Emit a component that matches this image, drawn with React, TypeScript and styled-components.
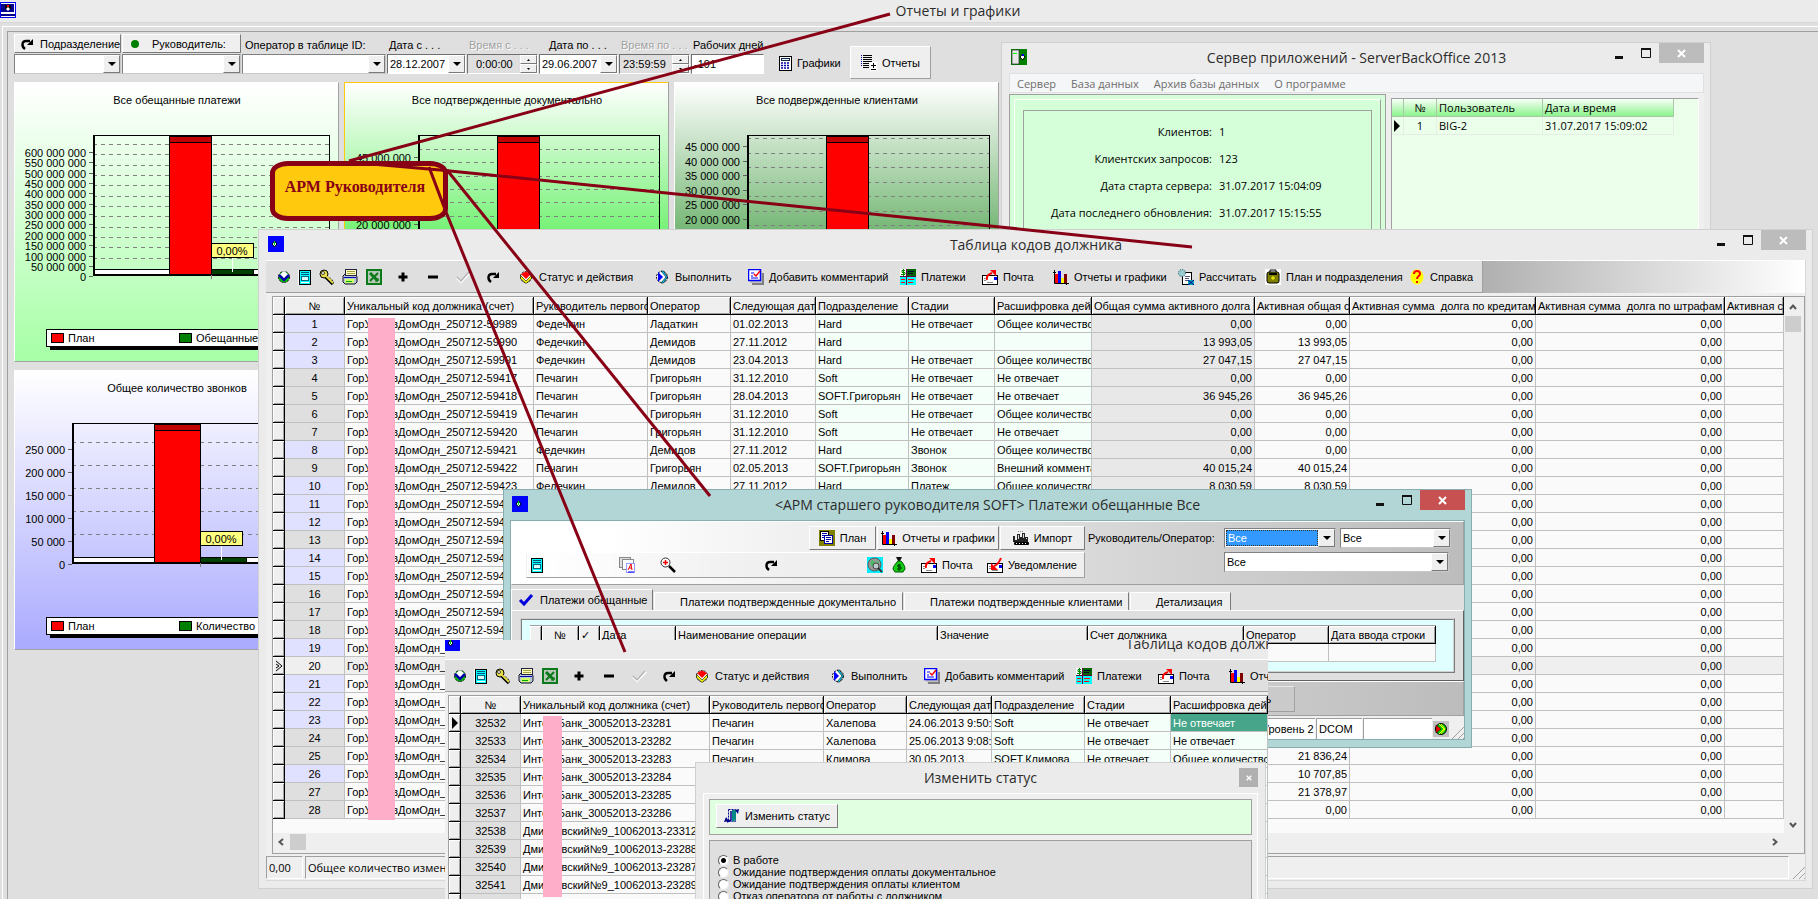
import React from 'react';
import styled, { createGlobalStyle, css } from 'styled-components';

const UI = '"Liberation Sans", Arial, sans-serif';
const SEGOE = '"Open Sans", "Noto Sans", sans-serif';
const MAROON = '#880015';

const GlobalStyle = createGlobalStyle`
  *, *::before, *::after { box-sizing: border-box; }
  html, body { margin: 0; padding: 0; height: 100%; }
  body { background: #dfdfdf; color: #000; font: 11px/14px ${UI}; overflow: hidden; }
  button, input, select { font: inherit; color: inherit; margin: 0; padding: 0; border: 0; background: none; border-radius: 0; outline: none; }
  select { appearance: none; }
  h1, h2, p { margin: 0; font-weight: 400; }
`;

/* ---------- icons ---------- */

type IconName =
  | 'chevron' | 'card' | 'key' | 'printer' | 'excel' | 'plus' | 'minus' | 'check' | 'refresh'
  | 'status' | 'run' | 'comment' | 'payments' | 'mail' | 'bars' | 'calc' | 'plan' | 'help'
  | 'screen' | 'app' | 'server' | 'calculator' | 'report' | 'planDoc' | 'import' | 'windows'
  | 'zoom' | 'globe' | 'bag' | 'notify' | 'blueCheck' | 'go' | 'door' | 'dot';

const envelope = (
  <>
    <rect x="0.5" y="6.5" width="15" height="9" fill="#fff" stroke="#000" />
    <rect x="12" y="8" width="3" height="3" fill="#00f" />
    <path d="M2 9.500h3M2 11.500h2M5 13.500h6" stroke="#888" />
  </>
);

const ICONS: Record<IconName, React.ReactNode> = {
  chevron: (
    <>
      <circle cx="8" cy="8" r="5.500" fill="#0c0" stroke="#000" strokeDasharray="2 1" />
      <path d="M3 6l5-4 5 4-5 5z" fill="#fff" />
      <path d="M3 6l5 5 5-5" stroke="#00a" strokeWidth="2.600" fill="none" />
    </>
  ),
  card: (
    <>
      <rect x="2.500" y="1.500" width="11" height="14" fill="#0ff" stroke="#000" />
      <path d="M4 3.500h8M4 5.500h8" stroke="#057" />
      <rect x="4.500" y="7.500" width="7" height="4" fill="#dff" stroke="#068" />
      <path d="M4 13.500h8" stroke="#fff" />
      <path d="M1.500 1v15" stroke="#fff" />
    </>
  ),
  key: (
    <>
      <circle cx="5" cy="5" r="4" fill="#e6dc4a" stroke="#000" />
      <circle cx="4" cy="4" r="1.500" fill="#fff" stroke="#000" strokeWidth="0.7" />
      <path d="M7 8l7 7M10 11l2-1M12 13l2-1" stroke="#000" strokeWidth="3.500" />
      <path d="M7 7l7 7M11 11l1-1" stroke="#e6dc4a" strokeWidth="1.800" />
    </>
  ),
  printer: (
    <>
      <path d="M1 7l2-2h11l1 3v5l-2 2H3l-2-2z" fill="#b8c4d8" stroke="#112" />
      <rect x="3.500" y="0.500" width="11" height="6" fill="#ffffc0" stroke="#224" />
      <path d="M5 2.500h8M5 4.500h8" stroke="#a0a040" />
      <rect x="3" y="10" width="9" height="4" fill="#cf6" />
      <path d="M2 8.500h12" stroke="#00a" />
      <path d="M4 12.500h6" stroke="#0a0" />
    </>
  ),
  excel: (
    <>
      <rect x="1" y="1" width="14" height="14" fill="#b8c8b8" stroke="#0a7a1a" strokeWidth="2" />
      <path d="M4 4l8 8" stroke="#0a7a1a" strokeWidth="3" />
      <path d="M12 4l-8 8" stroke="#0a7a1a" strokeWidth="2" />
      <path d="M9 12h3V9" stroke="#0a7a1a" fill="none" />
    </>
  ),
  plus: <path d="M8 3.500v9M3.500 8h9" stroke="#000" strokeWidth="3" />,
  minus: <path d="M3 8h10" stroke="#000" strokeWidth="3" />,
  check: (
    <>
      <path d="M2 9l4 4 9-9" stroke="#fff" strokeWidth="2" fill="none" />
      <path d="M2 8l4 4 8-9" stroke="#b4b4b4" strokeWidth="1.400" fill="none" />
    </>
  ),
  refresh: (
    <>
      <path d="M6 13C2 10 3 5 7 5h4" stroke="#000" strokeWidth="2.400" fill="none" />
      <path d="M8 9h6V3z" fill="#000" />
    </>
  ),
  status: (
    <>
      <circle cx="8" cy="8" r="5.500" fill="#fff" stroke="#000" strokeDasharray="2 1" />
      <path d="M2.500 6.500L8 12l5.500-5.500v3L8 14.500 2.500 9.500z" fill="#ff0" stroke="#000" strokeWidth="0.6" />
      <path d="M3 5l5-2.500L13 5l-5 5z" fill="#f00" />
    </>
  ),
  run: (
    <>
      <circle cx="8" cy="8" r="5.500" fill="#fff" stroke="#000" strokeDasharray="2 1" />
      <path d="M7 2l5 6-5 6h2.500l4-6-4-6z" fill="#0cf" stroke="#000" strokeWidth="0.6" />
      <path d="M4 3v10l5-5z" fill="#00f" />
    </>
  ),
  comment: (
    <>
      <path d="M4 4h12v12H4z" fill="#808080" />
      <path d="M2 2h12v12H2z" fill="#c0c0c0" />
      <rect x="0.500" y="0.500" width="12" height="11" fill="#fff" stroke="#00f" strokeWidth="1.500" />
      <path d="M3 4h3M3 7h2M3 9h7" stroke="#00f" />
      <path d="M6 5l2 2 4-5" stroke="#f00" strokeWidth="1.500" fill="none" />
    </>
  ),
  payments: (
    <>
      <rect width="16" height="16" fill="#0ff" />
      <rect width="6" height="7" fill="#fff" />
      <rect x="6" width="10" height="7" fill="#006400" />
      <path d="M5 1.500H2v2h3v2H1M3.500 0v7" stroke="#080" fill="none" />
      <path d="M8 2.500h6M8 4.500h5" stroke="#003" />
      <path d="M6.500 0v16M0 7.500h16" stroke="#604" />
      <path d="M1 10.500h4M1 13.500h4M8 10.500h6M8 13.500h5" stroke="#f00" />
    </>
  ),
  mail: (
    <>
      {envelope}
      <path d="M5 11C4 7 7 5 10 4" stroke="#f00" strokeWidth="2" fill="none" />
      <path d="M8 1h6v6z" fill="#f00" />
    </>
  ),
  notify: (
    <>
      {envelope}
      <path d="M14 1c-2 5-4 7-7 8" stroke="#f00" strokeWidth="2" fill="none" />
      <path d="M4 6v7h7z" fill="#f00" />
    </>
  ),
  bars: (
    <>
      <path d="M1.500 1v13.500H16M0 3.500h3M13.500 13v3" stroke="#000" fill="none" />
      <rect x="2" y="5" width="3" height="9" fill="#f00" />
      <rect x="5" y="2" width="3" height="12" fill="#00f" />
      <rect x="8" y="9" width="3" height="5" fill="#ff0" />
      <rect x="11" y="5" width="3" height="9" fill="#800000" />
    </>
  ),
  calc: (
    <>
      <rect x="4.500" y="3.500" width="9" height="12" fill="#fff" stroke="#000" />
      <circle cx="4" cy="4" r="3.500" fill="#9cc" stroke="#256" strokeDasharray="1 1" />
      <path d="M7 7.500h5M7 9.500h4M7 11.500h3" stroke="#557" />
      <path d="M10 11h6v5h-6z" fill="#0aa" />
      <path d="M10 11l6 5M16 11l-6 5" stroke="#00a" />
    </>
  ),
  plan: (
    <>
      <rect width="16" height="16" fill="#fff" />
      <rect x="2" y="3" width="12" height="11" rx="2" fill="#808000" stroke="#000" />
      <path d="M5 3V1h6v2" stroke="#000" fill="none" />
      <path d="M4 5h8" stroke="#000" strokeWidth="2" />
      <path d="M8 7v4M6 9h4" stroke="#ff0" />
    </>
  ),
  help: (
    <>
      <ellipse cx="8" cy="8" rx="6.500" ry="7.500" fill="#ff0" stroke="#fff080" strokeDasharray="1 1" />
      <path d="M5 5c0-4 6-4 6 0 0 2-3 2-3 5" stroke="#f00" strokeWidth="2" fill="none" />
      <rect x="7" y="12" width="2" height="2" fill="#f00" />
    </>
  ),
  screen: (
    <>
      <rect x="0.500" y="0.500" width="15" height="15" fill="#fff" stroke="#00f" />
      <rect x="1" y="2" width="13" height="8" fill="#00008b" />
      <rect x="5" y="3" width="6" height="4" fill="#000" />
      <path d="M6 7l2-2 2 2-2 2z" fill="#fff" />
      <rect x="7" y="3" width="2" height="2" fill="#f00" />
      <path d="M1 13h14" stroke="#00008b" strokeWidth="2" />
    </>
  ),
  app: (
    <>
      <rect width="16" height="16" fill="#00f" />
      <path d="M4 8l2.500-3L9 8l-2.500 3z" fill="#cff" stroke="#000" />
      <rect x="6" y="5" width="1" height="4" fill="#0c0" />
    </>
  ),
  server: (
    <>
      <rect width="16" height="16" fill="#008000" />
      <rect x="1" y="1" width="7" height="14" fill="#e8e8e8" stroke="#333" strokeWidth="0.700" />
      <path d="M2 4.500h4" stroke="#0f0" />
      <path d="M9 8l2.500-3L14 8l-2.500 3z" fill="#fff" stroke="#000" />
      <rect x="11" y="5" width="2" height="2" fill="#00f" />
    </>
  ),
  calculator: (
    <>
      <rect x="2.500" y="1.500" width="12" height="14" fill="#fff" stroke="#000" />
      <rect x="4.500" y="3.500" width="8" height="2" fill="#cff" stroke="#224" />
      <path d="M4 8h9M4 10.500h9M4 13h9" stroke="#00a" strokeWidth="1.500" strokeDasharray="2 1" />
    </>
  ),
  report: (
    <>
      <path d="M2 0.500h9M2 2.500h9M2 4.500h9M2 6.500h9M2 8.500h6M2 10.500h6M2 12.500h6" stroke="#000" />
      <path d="M0 0.500h1M0 2.500h1M0 4.500h1M0 6.500h1M0 8.500h1M0 10.500h1" stroke="#00a" />
      <rect x="9" y="7" width="7" height="9" fill="#fff" />
      <path d="M12.500 8v5M10 10.500h5M10 14.500h5" stroke="#000" />
    </>
  ),
  planDoc: (
    <>
      <rect width="16" height="16" fill="#808000" />
      <rect x="1.500" y="1.500" width="8" height="9" fill="#fff" stroke="#000" />
      <path d="M3 3.500h5M3 5.500h5M3 7.500h5" stroke="#00a" />
      <rect x="5.500" y="5.500" width="8" height="8" fill="#fff" stroke="#00a" />
      <path d="M7 7.500h5M7 9.500h5M7 11.500h3" stroke="#00a" />
    </>
  ),
  import: (
    <>
      <path d="M5 1.500h6" stroke="#888" strokeDasharray="1 1" />
      <path d="M4 10V4h3v3h2V3h3v4h3v5H0V6h2v4z" fill="#222" />
      <path d="M5.500 5v4M10.500 4v4M13 8.500h1" stroke="#ddd" fill="none" />
      <rect x="1" y="12" width="15" height="3" rx="1" fill="#000" />
      <path d="M3 13.500h11" stroke="#fff" strokeDasharray="1 2" />
    </>
  ),
  windows: (
    <>
      <rect x="0.500" y="0.500" width="11" height="10" fill="#ddd" stroke="#888" />
      <rect x="3.500" y="2.500" width="11" height="10" fill="#fff" stroke="#888" />
      <rect x="7.500" y="6.500" width="8" height="9" fill="#fff" stroke="#99f" />
      <path d="M9 13l3-6 1 6M10 11h3" stroke="#e00" fill="none" />
      <path d="M9 15h6" stroke="#00f" />
    </>
  ),
  zoom: (
    <>
      <path d="M9 9l6 6" stroke="#000" strokeWidth="2.500" />
      <circle cx="5.500" cy="5.500" r="4.500" fill="#fff" stroke="#333" />
      <path d="M5.500 3v5M3 5.500h5" stroke="#e00" strokeWidth="1.500" />
    </>
  ),
  globe: (
    <>
      <rect width="16" height="16" fill="#0ef" />
      <circle cx="7.500" cy="7.500" r="6.500" fill="#999" stroke="#555" />
      <path d="M3 5l3-2 2 3-3 4zM9 3l3 2-1 3z" fill="#4b6" />
      <circle cx="9" cy="9" r="3" fill="#bcc" stroke="#444" />
      <path d="M11 11l4 4" stroke="#333" strokeWidth="2" />
    </>
  ),
  bag: (
    <>
      <path d="M6 0h6L10 4H8z" fill="#111" />
      <path d="M8 4h3c3 3 4 6 4 8l-2 3H5l-2-3c0-2 2-5 5-8z" fill="#1c1" stroke="#050" />
      <path d="M11 8H8v2h3v2H7M9 7v7" stroke="#030" fill="none" />
      <path d="M0 1h4M1 4h3" stroke="#fff" />
    </>
  ),
  blueCheck: <path d="M2 8l4 4 8-9" stroke="#00d" strokeWidth="3" fill="none" />,
  go: (
    <>
      <rect width="16" height="16" fill="#c0c0c0" />
      <circle cx="8" cy="8" r="5.500" fill="#0c0" stroke="#000" />
      <path d="M3 4v8l5-4z" fill="#f00" stroke="#000" strokeWidth="0.500" />
      <path d="M6 3l5 5-5 5M8 3l4 5-4 5" stroke="#ff0" fill="none" />
    </>
  ),
  door: (
    <>
      <rect x="4.500" y="1.500" width="7" height="12" fill="#e8e8e8" stroke="#00008b" strokeDasharray="2 1" />
      <path d="M8 2h4v10l-4 2z" fill="#088" />
      <path d="M11 2l4-1-1 5zM0 14l5-1-3-4z" fill="#00008b" />
      <path d="M7 3v9l-4 2" stroke="#00008b" strokeWidth="1.500" fill="none" />
    </>
  ),
  dot: <circle cx="8" cy="8" r="4" fill="#008000" />,
};

const Svg = styled.svg`
  flex: none;
  display: block;
`;

const Icon = ({ name }: { name: IconName }) => (
  <Svg width="16" height="16" viewBox="0 0 16 16" aria-hidden="true">{ICONS[name]}</Svg>
);

/* ---------- window chrome ---------- */

const WindowFrame = styled.section<{ $active?: boolean }>`
  display: flex;
  flex-direction: column;
  background: ${p => (p.$active ? '#b2d6d6' : '#ebebeb')};
  border: 1px solid ${p => (p.$active ? '#86aeb0' : '#d0d0d0')};
  padding: 0 6px 7px ${p => (p.$active ? 6 : 7)}px;
`;

const TitleBar = styled.header`
  display: grid;
  grid-template-columns: 1fr auto 1fr;
  height: 30px;
  flex: none;
`;

const TitleIcon = styled.div`
  padding: 6px 0 0 2px;
`;

const Title = styled.h2`
  font: 14px/30px ${SEGOE};
  color: #2b2b2b;
  white-space: nowrap;
`;

const WindowButtons = styled.div`
  display: flex;
  justify-content: flex-end;
  align-items: flex-start;
`;

const GlyphButton = styled.button`
  width: 27px;
  height: 20px;
  display: flex;
  align-items: center;
  justify-content: center;
`;

const CloseButton = styled.button<{ $active?: boolean }>`
  width: 45px;
  height: 20px;
  display: flex;
  align-items: center;
  justify-content: center;
  background: ${p => (p.$active ? '#c75050' : '#bcbcbc')};
`;

const Cross = () => (
  <Svg width="9" height="9" viewBox="0 0 9 9"><path d="M1 1l7 7M8 1l-7 7" stroke="#fff" strokeWidth="2" /></Svg>
);

const Caption = ({ icon, title, active }: { icon: IconName; title: string; active?: boolean }) => (
  <TitleBar>
    <TitleIcon><Icon name={icon} /></TitleIcon>
    <Title>{title}</Title>
    <WindowButtons>
      <GlyphButton aria-label="Свернуть">
        <Svg width="10" height="12" viewBox="0 0 10 12"><rect x="1" y="9" width="8" height="3" fill="#111" /></Svg>
      </GlyphButton>
      <GlyphButton aria-label="Развернуть">
        <Svg width="10" height="10" viewBox="0 0 10 10"><path d="M.5 1v8.500h9V1" stroke="#111" fill="none" /><rect width="10" height="2" fill="#111" /></Svg>
      </GlyphButton>
      <CloseButton $active={active} aria-label="Закрыть"><Cross /></CloseButton>
    </WindowButtons>
  </TitleBar>
);

/* ---------- shared controls ---------- */

const raised = css`
  background: #efefef;
  border: 1px solid;
  border-color: #fff #7a7a7a #7a7a7a #fff;
`;

const PushButton = styled.button<{ $w?: number; $h?: number }>`
  ${raised}
  display: flex;
  align-items: center;
  justify-content: center;
  gap: 5px;
  width: ${p => (p.$w ? `${p.$w}px` : 'auto')};
  height: ${p => p.$h ?? 24}px;
  white-space: nowrap;
`;

const ComboWrap = styled.div<{ $w?: number }>`
  position: relative;
  width: ${p => (p.$w ? `${p.$w}px` : '100%')};
  height: 20px;
  background: #fff;
  border: 1px solid;
  border-color: #808080 #c8c8c8 #c8c8c8 #808080;
`;

const ComboSelect = styled.select<{ $hot?: boolean }>`
  width: calc(100% - 18px);
  height: 18px;
  padding: 0 2px;
  display: block;
  ${p => p.$hot && css`
    height: 16px;
    margin: 1px;
    background: #3399ff;
    color: #fff;
    outline: 1px dotted #333;
    outline-offset: -1px;
  `}
`;

const Drop = styled.span`
  position: absolute;
  right: 0;
  top: 0;
  width: 17px;
  height: 18px;
  ${raised}
  display: flex;
  align-items: center;
  justify-content: center;
  pointer-events: none;
`;

const Triangle = () => (
  <Svg width="8" height="4" viewBox="0 0 8 4"><path d="M0 0h8L4 4z" fill="#000" /></Svg>
);

const Combo = ({ label, value = '', w, hot }: { label: string; value?: string; w?: number; hot?: boolean }) => (
  <ComboWrap $w={w}>
    <ComboSelect aria-label={label} $hot={hot} defaultValue={value}><option>{value}</option></ComboSelect>
    <Drop><Triangle /></Drop>
  </ComboWrap>
);

/* ---------- reports window ---------- */

const Desktop = styled.main`
  position: relative;
  height: 100vh;
  overflow: hidden;
  background: #dfdfdf;
`;

const ReportsBar = styled.header`
  display: flex;
  align-items: flex-start;
  height: 23px;
  padding-top: 2px;
  background: #ebebeb;
  border-bottom: 1px solid #d8d8d8;
`;

const ReportsTitle = styled.h1`
  flex: 1;
  padding-left: 82px;
  text-align: center;
  font: 14px/17px ${SEGOE};
  color: #2b2b2b;
`;

const OuterEdge = styled.div`
  margin: 3px 0 0 2px;
  padding: 4px 0 0 4px;
  border: 1px solid #fff;
  border-width: 1px 0 0 1px;
`;

const InnerEdge = styled.div`
  border: 1px solid #a0a0a0;
  border-width: 1px 0 0 1px;
  padding: 2px 0 0 6px;
  min-height: 100vh;
`;

const Filters = styled.div`
  display: flex;
  align-items: flex-start;
  height: 48px;
`;

const FilterColumn = styled.div<{ $w: number }>`
  width: ${p => p.$w}px;
  padding-right: 1px;
  flex: none;
`;

const FilterLabel = styled.label<{ $pad?: number; $off?: boolean }>`
  display: block;
  height: 20px;
  padding-left: ${p => p.$pad ?? 2}px;
  line-height: 22px;
  white-space: nowrap;
  overflow: hidden;
  color: ${p => (p.$off ? '#a0a0a0' : '#000')};
  text-shadow: ${p => (p.$off ? '1px 1px 0 #fff' : 'none')};
`;

const FilterButton = styled(PushButton)`
  width: 100%;
  height: 19px;
  margin-bottom: 1px;
  justify-content: flex-start;
  padding-left: 4px;
  overflow: hidden;
`;

const ManagerButton = styled(FilterButton)`
  gap: 9px;
`;

const Field = styled.div<{ $off?: boolean }>`
  display: flex;
  height: 20px;
  border: 1px solid;
  border-color: #707070 #fff #fff #707070;
  background: ${p => (p.$off ? '#dfdfdf' : '#fff')};
`;

const FieldInput = styled.input<{ $pad?: number }>`
  flex: 1;
  min-width: 0;
  padding-left: ${p => p.$pad ?? 2}px;
`;

const DropButton = styled.button`
  ${raised}
  width: 17px;
  display: flex;
  align-items: center;
  justify-content: center;
`;

const Spinner = styled.div`
  display: flex;
  flex-direction: column;
  width: 17px;
`;

const SpinButton = styled.button`
  ${raised}
  flex: 1;
  display: flex;
  align-items: center;
  justify-content: center;
`;

const FlatButton = styled.button`
  display: flex;
  align-items: center;
  gap: 4px;
  width: 80px;
  height: 33px;
  margin: 12px 0 0 5px;
  padding-left: 7px;
`;

const ReportButton = styled(PushButton)`
  margin-top: 12px;
  border-color: #fff #a0a0a0 #a0a0a0 #fff;
`;

const DateField = ({ id, value }: { id: string; value: string }) => (
  <Field>
    <FieldInput id={id} defaultValue={value} />
    <DropButton aria-label="Выбрать дату"><Triangle /></DropButton>
  </Field>
);

const TimeField = ({ id, value, pad }: { id: string; value: string; pad: number }) => (
  <Field $off>
    <FieldInput id={id} defaultValue={value} $pad={pad} />
    <Spinner>
      <SpinButton aria-label="Больше"><Svg width="3" height="2" viewBox="0 0 3 2"><path d="M0 2h3L1.500 0z" /></Svg></SpinButton>
      <SpinButton aria-label="Меньше"><Svg width="3" height="2" viewBox="0 0 3 2"><path d="M0 0h3L1.500 2z" /></Svg></SpinButton>
    </Spinner>
  </Field>
);

/* ---------- charts ---------- */

const ChartGrid = styled.div`
  display: grid;
  grid-template-columns: repeat(3, 325px);
  gap: 8px 5px;
`;

const ChartCard = styled.figure<{ $fill: string; $edge?: string }>`
  margin: 0;
  height: 280px;
  background: linear-gradient(${p => p.$fill});
  border: 1px solid;
  border-color: ${p => p.$edge ?? '#fff'} #a0a0a0 #a0a0a0 ${p => p.$edge ?? '#fff'};
`;

interface ChartProps {
  title: string;
  fill: string;
  edge?: string;
  left: number;
  bar: [number, number];
  labels: string[];
  first: number;
  step: number;
  gridStart: number;
  legend?: string;
}

const Chart = ({ title, fill, edge, left, bar, labels, first, step, gridStart, legend }: ChartProps) => {
  const right = 315;
  const lines: number[] = [];
  for (let y = gridStart; y < 182; y += step) lines.push(Math.round(y));
  const [b0, b1] = bar;
  return (
    <ChartCard $fill={fill} $edge={edge}>
      <Svg width="323" height="278" viewBox="1 1 323 278" fontFamily="Liberation Sans" fontSize="11" shapeRendering="crispEdges">
        <text x="163" y="22" textAnchor="middle">{title}</text>
        <rect x={left} y="53.500" width={right - left} height="134" fill="none" stroke="#000" />
        {lines.map(y => <path key={y} d={`M${left - 1} ${y + 0.5}H${right}`} stroke="#808080" strokeDasharray="4 4" />)}
        <path d={`M${left} 187.500H${right}`} stroke="#000" strokeDasharray="3 3" />
        <rect x={left} y="188" width={right - left} height="5" fill="#fff" />
        <path d={`M${left} 193h${right - left}`} stroke="#000" strokeWidth="2" />
        <path d={`M${left} 53v141`} stroke="#000" strokeWidth="2" />
        {labels.map((t, i) => {
          const y = Math.round(first + i * step);
          return (
            <g key={t}>
              <text x={left - 8} y={y + 4} textAnchor="end">{t}</text>
              <path d={`M${left - 5} ${y - 0.5}h4`} stroke="#606060" />
            </g>
          );
        })}
        <rect x={b0 + 0.5} y="54.500" width={b1 - b0} height="6" fill="#c00000" stroke="#000" />
        <rect x={b0 + 0.5} y="60.500" width={b1 - b0} height="132" fill="#f00" stroke="#000" />
        <rect x={b1 + 0.5} y="187.500" width={b1 - b0} height="5" fill="#004000" stroke="#000" />
        <path d={`M${b1 + 0.5} 193v4`} stroke="#808080" />
        <rect x={b1 + 0.5} y="161.500" width="42" height="14" fill="#ffff80" stroke="#000" />
        <text x={b1 + 21} y="173" textAnchor="middle">0,00%</text>
        <path d={`M${b1 + 21.500} 176v14`} stroke="#fff" />
        {legend && (
          <g>
            <rect x="36" y="252" width="250" height="16" fill="#000" />
            <rect x="32.500" y="247.500" width="250" height="17" fill="#fff" stroke="#000" />
            <rect x="37.500" y="251.500" width="12" height="9" fill="#f00" stroke="#000" />
            <text x="54" y="260">План</text>
            <rect x="165.500" y="251.500" width="12" height="9" fill="#008000" stroke="#000" />
            <text x="182" y="260">{legend}</text>
          </g>
        )}
      </Svg>
    </ChartCard>
  );
};

const steps = (from: number, by: number) => {
  const out: string[] = [];
  for (let v = from; v >= 0; v -= by) out.push(String(v).replace(/\B(?=(\d{3})+$)/g, '\u00a0'));
  return out;
};

const Reports = () => (
  <>
    <ReportsBar>
      <Icon name="screen" />
      <ReportsTitle>Отчеты и графики</ReportsTitle>
    </ReportsBar>
    <OuterEdge>
      <InnerEdge>
        <Filters>
          <FilterColumn $w={108}>
            <FilterButton><Icon name="refresh" />Подразделение</FilterButton>
            <Combo label="Подразделение" />
          </FilterColumn>
          <FilterColumn $w={120}>
            <ManagerButton><Icon name="dot" />Руководитель:</ManagerButton>
            <Combo label="Руководитель" />
          </FilterColumn>
          <FilterColumn $w={145}>
            <FilterLabel as="div" $pad={3}>Оператор в таблице ID:</FilterLabel>
            <Combo label="Оператор в таблице ID" />
          </FilterColumn>
          <FilterColumn $w={80}>
            <FilterLabel htmlFor="date-from">Дата с . . .</FilterLabel>
            <DateField id="date-from" value="28.12.2007" />
          </FilterColumn>
          <FilterColumn $w={72}>
            <FilterLabel htmlFor="time-from" $off>Время с . . .</FilterLabel>
            <TimeField id="time-from" value="0:00:00" pad={8} />
          </FilterColumn>
          <FilterColumn $w={80}>
            <FilterLabel htmlFor="date-to" $pad={10}>Дата по . . .</FilterLabel>
            <DateField id="date-to" value="29.06.2007" />
          </FilterColumn>
          <FilterColumn $w={72}>
            <FilterLabel htmlFor="time-to" $off>Время по . . .</FilterLabel>
            <TimeField id="time-to" value="23:59:59" pad={3} />
          </FilterColumn>
          <FilterColumn $w={74}>
            <FilterLabel htmlFor="work-days">Рабочих дней</FilterLabel>
            <Field><FieldInput id="work-days" defaultValue="-191" /></Field>
          </FilterColumn>
          <FlatButton><Icon name="calculator" />Графики</FlatButton>
          <ReportButton $w={81} $h={33}><Icon name="report" />Отчеты</ReportButton>
        </Filters>
        <ChartGrid>
          <Chart title="Все обещанные платежи" fill="#ffffff, #a6ffa6" left={80} bar={[155, 197]}
            labels={steps(600000000, 50000000)} first={71} step={10.35} gridStart={62} legend="Обещанные" />
          <Chart title="Все подтвержденные документально" fill="#ffffff, #79f279 52%, #40e840" edge="#ffc90e" left={75} bar={[153, 195]}
            labels={steps(45000000, 5000000)} first={76} step={13.300} gridStart={67} />
          <Chart title="Все подвержденные клиентами" fill="#ffffff, #78b878 52%, #409040" left={74} bar={[152, 194]}
            labels={steps(45000000, 5000000)} first={65} step={14.500} gridStart={56} />
          <Chart title="Общее количество звонков" fill="#ffffff, #aaaaff" left={59} bar={[140, 186]}
            labels={steps(250000, 50000)} first={80} step={23} gridStart={72} legend="Количество" />
        </ChartGrid>
      </InnerEdge>
    </OuterEdge>
  </>
);

/* ---------- server window ---------- */

const ServerWindow = styled(WindowFrame)`
  position: absolute;
  left: 1001px;
  top: 42px;
  width: 710px;
  height: 300px;
`;

const Menu = styled.nav`
  display: flex;
  gap: 15px;
  height: 20px;
  padding-left: 7px;
  background: #f5f6f7;
  border: 1px solid #e0e0e0;
  font: 11px/19px ${SEGOE};
  color: #6d6d6d;
`;

const ServerBody = styled.div`
  display: flex;
  gap: 5px;
  flex: 1;
  padding-top: 1px;
  background: #efefef;
`;

const ServerPane = styled.div`
  width: 377px;
  padding: 4px 4px 0;
  background: #d5ffd8;
  border: 1px solid #a0a0a0;
`;

const ServerEdge = styled.div`
  height: 100%;
  padding: 10px 8px 0;
  border: 1px solid #fff;
  border-right-color: #a0a0a0;
`;

const ServerStats = styled.dl`
  display: grid;
  grid-template-columns: 188px 1fr;
  grid-auto-rows: 27px;
  gap: 0 7px;
  height: 100%;
  margin: 0;
  padding-top: 8px;
  line-height: 26px;
  border: 1px solid #a0a0a0;
  font-family: ${SEGOE};
  dt { text-align: right; white-space: nowrap; }
  dd { margin: 0; }
`;

const UserPane = styled.div`
  flex: 1;
  margin: 4px 5px 0 0;
  background: #ebffeb;
  border: 1px solid #a0a0a0;
  border-right-color: #fff;
`;

const UserTable = styled.table`
  border-collapse: separate;
  border-spacing: 0;
  table-layout: fixed;
  width: 282px;
  font-family: ${SEGOE};
  th, td { height: 18px; padding: 0 2px; border: 1px solid #e4eee4; border-width: 0 1px 1px 0; text-align: left; font-weight: 400; line-height: 16px; white-space: nowrap; }
  th { background: linear-gradient(#f8fff8, #8cf48c); border-color: #a8c8a8; }
  td:nth-child(2), th:nth-child(2) { text-align: center; }
`;

const Server = () => (
  <ServerWindow>
    <Caption icon="server" title="Сервер приложений - ServerBackOffice 2013" />
    <Menu><span>Сервер</span><span>База данных</span><span>Архив базы данных</span><span>О программе</span></Menu>
    <ServerBody>
      <ServerPane>
        <ServerEdge>
          <ServerStats>
            <dt>Клиентов:</dt><dd>1</dd>
            <dt>Клиентских запросов:</dt><dd>123</dd>
            <dt>Дата старта сервера:</dt><dd>31.07.2017 15:04:09</dd>
            <dt>Дата последнего обновления:</dt><dd>31.07.2017 15:15:55</dd>
          </ServerStats>
        </ServerEdge>
      </ServerPane>
      <UserPane>
        <UserTable>
          <colgroup><col style={{ width: 12 }} /><col style={{ width: 33 }} /><col style={{ width: 106 }} /><col /></colgroup>
          <thead><tr><th /><th>№</th><th>Пользователь</th><th>Дата и время</th></tr></thead>
          <tbody><tr><td><Svg width="7" height="12" viewBox="0 0 7 12"><path d="M0 0v12l6-6z" /></Svg></td><td>1</td><td>BIG-2</td><td>31.07.2017 15:09:02</td></tr></tbody>
        </UserTable>
      </UserPane>
    </ServerBody>
  </ServerWindow>
);

/* ---------- debtor window ---------- */

const Toolbar = styled.div`
  display: flex;
  height: 33px;
  background: linear-gradient(90deg, #b0b0b0, #b0b0b0 1217px, #fff);
  border-top: 1px solid #fff;
`;

const ToolGroup = styled.div`
  display: flex;
  align-items: center;
  padding-left: 10px;
  background: #dfdfdf;
  border: 1px solid #a0a0a0;
  border-width: 0 1px 1px 0;
`;

const ToolButton = styled.button<{ $w: number }>`
  display: flex;
  align-items: center;
  gap: 5px;
  width: ${p => p.$w}px;
  height: 24px;
  flex: none;
  white-space: nowrap;
`;

const TOOLS: { icon: IconName; w: number; text?: string; hint?: string }[] = [
  { icon: 'chevron', w: 21, hint: 'Меню' },
  { icon: 'card', w: 22, hint: 'Карточка' },
  { icon: 'key', w: 23, hint: 'Доступ' },
  { icon: 'printer', w: 24, hint: 'Печать' },
  { icon: 'excel', w: 29, hint: 'Excel' },
  { icon: 'plus', w: 30, hint: 'Добавить' },
  { icon: 'minus', w: 30, hint: 'Удалить' },
  { icon: 'check', w: 30, hint: 'Применить' },
  { icon: 'refresh', w: 33, hint: 'Обновить' },
  { icon: 'status', w: 136, text: 'Статус и действия' },
  { icon: 'run', w: 94, text: 'Выполнить' },
  { icon: 'comment', w: 152, text: 'Добавить комментарий' },
  { icon: 'payments', w: 82, text: 'Платежи' },
  { icon: 'mail', w: 71, text: 'Почта' },
  { icon: 'bars', w: 125, text: 'Отчеты и графики' },
  { icon: 'calc', w: 87, text: 'Рассчитать' },
  { icon: 'plan', w: 144, text: 'План и подразделения' },
  { icon: 'help', w: 73, text: 'Справка' },
];

const WindowBody = styled.div`
  display: flex;
  flex-direction: column;
  background: #efefef;
  border: 1px solid #d8d8d8;
  border-width: 0 1px 1px 0;
`;

const GridFrame = styled.div`
  display: grid;
  grid-template-columns: minmax(0, 1fr) 17px;
  grid-template-rows: 536px 17px;
  margin: 3px 0 0 6px;
  padding: 0 3px 3px 0;
  border: 1px solid #a0a0a0;
`;

const GridArea = styled.div`
  background: #fafafa;
  overflow: hidden;
`;

const headCell = css`
  background: #efefef;
  border: 1px solid #000;
  border-width: 0 1px 1px 0;
  box-shadow: inset 1px 1px #fff, inset -1px -1px #a0a0a0;
`;

const DebtorTable = styled.table`
  width: 100%;
  table-layout: fixed;
  border-collapse: separate;
  border-spacing: 0;
`;

const Head = styled.th`
  ${headCell}
  height: 18px;
  padding: 0 2px;
  font-weight: 400;
  text-align: left;
  white-space: pre;
  overflow: hidden;
  &:nth-child(2) { text-align: center; }
`;

const Cell = styled.td<{ $bg?: string; $align?: string; $ink?: string }>`
  height: 18px;
  padding: 0 2px;
  line-height: 16px;
  background: ${p => p.$bg ?? '#fafafa'};
  color: ${p => p.$ink ?? '#000'};
  text-align: ${p => p.$align ?? 'left'};
  border: 1px solid #c0c0c0;
  border-width: 0 1px 1px 0;
  white-space: nowrap;
  overflow: hidden;
`;

const Marker = styled.td`
  ${headCell}
  height: 18px;
  padding: 0 0 0 3px;
`;

const ScrollV = styled.div`
  display: flex;
  flex-direction: column;
  align-items: center;
  justify-content: space-between;
  padding: 6px 0 4px;
  background: #efefef;
`;

const ScrollStart = styled.div<{ $row?: boolean }>`
  display: flex;
  flex-direction: ${p => (p.$row ? 'row' : 'column')};
  align-items: center;
  gap: 5px;
`;

const ScrollH = styled.div`
  display: flex;
  align-items: center;
  justify-content: space-between;
  padding: 0 5px 0 4px;
  background: #efefef;
`;

const Thumb = styled.div`
  width: 16px;
  height: 16px;
  background: #cdcdcd;
`;

const Arrow = ({ turn }: { turn: number }) => (
  <Svg width="8" height="8" viewBox="0 0 8 8"><path d="M1 6l3-3.500L7 6" transform={`rotate(${turn} 4 4)`} stroke="#555" strokeWidth="2" fill="none" /></Svg>
);

const StatusBar = styled.footer`
  display: flex;
  gap: 2px;
  height: 25px;
  margin-top: 1px;
  padding: 1px 0;
  font: 11px/22px ${SEGOE};
`;

const StatusCell = styled.div<{ $w?: number }>`
  flex: ${p => (p.$w ? 'none' : 1)};
  width: ${p => (p.$w ? `${p.$w}px` : 'auto')};
  padding-left: 2px;
  white-space: nowrap;
  overflow: hidden;
  border: 1px solid;
  border-color: #a0a0a0 #fff #fff #a0a0a0;
`;

const Grip = styled.div`
  align-self: flex-end;
  width: 14px;
  height: 14px;
  background: repeating-linear-gradient(135deg, transparent 0 3px, #a0a0a0 3px 4px);
  clip-path: polygon(100% 0, 100% 100%, 0 100%);
`;

const COLUMNS: [string, number | undefined][] = [
  ['', 12], ['№', 60], ['Уникальный код должника (счет)', 189], ['Руководитель первого', 114],
  ['Оператор', 83], ['Следующая дата', 85], ['Подразделение', 93], ['Стадии', 86],
  ['Расшифровка действия', 97], ['Общая сумма активного долга', 163], ['Активная общая сумма', 95],
  ['Активная сумма  долга по кредитам', 186], ['Активная сумма  долга по штрафам', 189], ['Активная сумма', undefined],
];

interface Debtor {
  n: number;
  code: string;
  chief: string;
  operator: string;
  date: string;
  unit: string;
  stage: string;
  note: string;
  sum: string;
  tint?: boolean;
}

const NO = 'Не отвечает';
const TOTAL = 'Общее количество';
const d = (n: number, code: string, chief: string, operator: string, date: string, unit: string, stage: string, note: string, sum: string, tint = false): Debtor =>
  ({ n, code, chief, operator, date, unit, stage, note, sum, tint });

const uk = (tail: string) => `ГорУпра вДомОдн_250712-${tail}`;
const tinted = [11, 12, 14, 15, 19, 21, 22, 23, 26];
const lateSums: Record<number, string> = { 25: '21 836,24', 26: '10 707,85', 27: '21 378,97' };

const DEBTORS: Debtor[] = [
  d(1, uk('59989'), 'Федечкин', 'Ладаткин', '01.02.2013', 'Hard', NO, TOTAL, '0,00', true),
  d(2, uk('59990'), 'Федечкин', 'Демидов', '27.11.2012', 'Hard', '', '', '13 993,05', true),
  d(3, uk('59991'), 'Федечкин', 'Демидов', '23.04.2013', 'Hard', NO, TOTAL, '27 047,15', true),
  d(4, uk('59417'), 'Печагин', 'Григорьян', '31.12.2010', 'Soft', NO, NO, '0,00'),
  d(5, uk('59418'), 'Печагин', 'Григорьян', '28.04.2013', 'SOFT.Григорьян', NO, NO, '36 945,26'),
  d(6, uk('59419'), 'Печагин', 'Григорьян', '31.12.2010', 'Soft', NO, TOTAL, '0,00'),
  d(7, uk('59420'), 'Печагин', 'Григорьян', '31.12.2010', 'Soft', NO, NO, '0,00'),
  d(8, uk('59421'), 'Федечкин', 'Демидов', '27.11.2012', 'Hard', 'Звонок', TOTAL, '0,00', true),
  d(9, uk('59422'), 'Печагин', 'Григорьян', '02.05.2013', 'SOFT.Григорьян', 'Звонок', 'Внешний комментарий', '40 015,24'),
  d(10, uk('59423'), 'Федечкин', 'Демидов', '27.11.2012', 'Hard', 'Платеж', TOTAL, '8 030,59', true),
  ...Array.from({ length: 18 }, (_, i) => {
    const n = i + 11;
    return d(n, uk(String(59413 + n)), 'Печагин', 'Григорьян', '31.12.2010', 'Soft', NO, NO, lateSums[n] ?? '0,00', tinted.includes(n));
  }),
];

const BANK: Debtor[] = [
  d(32532, 'Интер-Банк_30052013-23281', 'Печагин', 'Халепова', '24.06.2013 9:50:12', 'Soft', NO, NO, '0,00'),
  d(32533, 'Интер-Банк_30052013-23282', 'Печагин', 'Халепова', '25.06.2013 9:08:41', 'Soft', NO, NO, '0,00'),
  d(32534, 'Интер-Банк_30052013-23283', 'Печагин', 'Климова', '30.05.2013', 'SOFT.Климова', NO, TOTAL, '0,00'),
  d(32535, 'Интер-Банк_30052013-23284', 'Печагин', 'Климова', '30.05.2013', 'Soft', NO, NO, '0,00'),
  d(32536, 'Интер-Банк_30052013-23285', 'Печагин', 'Климова', '30.05.2013', 'Soft', NO, NO, '0,00'),
  d(32537, 'Интер-Банк_30052013-23286', 'Печагин', 'Климова', '30.05.2013', 'Soft', NO, NO, '0,00'),
  d(32538, 'Дмитровский№9_10062013-23312', 'Печагин', 'Климова', '30.05.2013', 'Soft', NO, NO, '0,00'),
  d(32539, 'Дмитровский№9_10062013-23288', 'Печагин', 'Климова', '30.05.2013', 'Soft', NO, NO, '0,00'),
  d(32540, 'Дмитровский№9_10062013-23287', 'Печагин', 'Климова', '30.05.2013', 'Soft', NO, NO, '0,00'),
  d(32541, 'Дмитровский№9_10062013-23289', 'Печагин', 'Климова', '30.05.2013', 'Soft', NO, NO, '0,00'),
  d(32542, 'Дмитровский№9_10062013-23290', 'Печагин', 'Климова', '30.05.2013', 'Soft', NO, NO, '0,00'),
];

const DebtorRow = ({ row, current, picked }: { row: Debtor; current: boolean; picked: boolean }) => {
  const hot = current && !picked ? '#efefef' : undefined;
  const mint = hot ?? '#f4fffa';
  return (
    <tr>
      <Marker>
        {current && (
          <Svg width="7" height="12" viewBox="0 0 7 12">
            {picked ? <path d="M0 0v12l6-6z" /> : <path d="M0 1l6 5-6 5M0 4l3 2-3 2" stroke="#000" fill="none" />}
          </Svg>
        )}
      </Marker>
      <Cell $align="center" $bg={hot ?? (row.tint ? '#e0e0ff' : '#dfdfdf')}>{row.n}</Cell>
      <Cell $bg={hot}>{row.code}</Cell>
      <Cell $bg={hot}>{row.chief}</Cell>
      <Cell $bg={hot}>{row.operator}</Cell>
      <Cell $bg={hot}>{row.date}</Cell>
      <Cell $bg={mint}>{row.unit}</Cell>
      <Cell $bg={mint}>{row.stage}</Cell>
      <Cell $bg={picked ? '#47a68a' : mint} $ink={picked ? '#fff' : undefined}>{row.note}</Cell>
      <Cell $align="right" $bg={hot ?? '#e8e8e8'}>{row.sum}</Cell>
      <Cell $align="right" $bg={hot}>{row.sum}</Cell>
      <Cell $align="right" $bg={hot}>0,00</Cell>
      <Cell $align="right" $bg={hot}>0,00</Cell>
      <Cell $bg={hot} />
    </tr>
  );
};

const DebtorContent = ({ rows, current, picked = false }: { rows: Debtor[]; current: number; picked?: boolean }) => (
  <>
    <Caption icon="app" title="Таблица кодов должника" />
    <WindowBody>
      <Toolbar>
        <ToolGroup>
          {TOOLS.map(t => (
            <ToolButton key={t.icon} $w={t.w} aria-label={t.hint}><Icon name={t.icon} />{t.text}</ToolButton>
          ))}
        </ToolGroup>
      </Toolbar>
      <GridFrame>
        <GridArea>
          <DebtorTable>
            <colgroup>{COLUMNS.map(([name, w]) => <col key={name} style={{ width: w }} />)}</colgroup>
            <thead><tr>{COLUMNS.map(([name]) => <Head key={name}>{name}</Head>)}</tr></thead>
            <tbody>
              {rows.map(r => <DebtorRow key={r.n} row={r} current={r.n === current} picked={picked && r.n === current} />)}
            </tbody>
          </DebtorTable>
        </GridArea>
        <ScrollV>
          <ScrollStart><Arrow turn={0} /><Thumb /></ScrollStart>
          <Arrow turn={180} />
        </ScrollV>
        <ScrollH>
          <ScrollStart $row><Arrow turn={-90} /><Thumb /></ScrollStart>
          <Arrow turn={90} />
        </ScrollH>
        <span />
      </GridFrame>
      <StatusBar>
        <StatusCell $w={37}>0,00</StatusCell>
        <StatusCell>Общее количество измененных строк</StatusCell>
        <Grip />
      </StatusBar>
    </WindowBody>
  </>
);

const DebtorWindow = styled(WindowFrame)`
  position: absolute;
  left: 258px;
  right: 5px;
  top: 229px;
`;

const SecondClip = styled.div`
  position: absolute;
  left: 445px;
  top: 640px;
  bottom: 0;
  width: 823px;
  overflow: hidden;
`;

const SecondWindow = styled(WindowFrame)`
  width: 1555px;
  margin: -12px 0 0 -11px;
`;

/* ---------- senior manager window ---------- */

const SoftWindow = styled(WindowFrame)`
  position: absolute;
  left: 503px;
  top: 489px;
  width: 969px;
  height: 259px;
`;

const SoftBody = styled.div`
  display: flex;
  flex-direction: column;
  flex: 1;
  min-height: 0;
  background: #dfdfdf;
  border: 1px solid #86aeb0;
`;

const SoftTop = styled.div`
  display: grid;
  grid-template-columns: 573px 1fr;
  height: 64px;
  padding: 4px 0 0;
  background: linear-gradient(90deg, #fff 10%, #bcbcbc);
  border: 1px solid;
  border-color: #fff #a0a0a0 #a0a0a0 #fff;
  flex: none;
`;

const SoftTools = styled.div`
  display: flex;
  flex-direction: column;
  gap: 2px;
`;

const ButtonRow = styled.div`
  display: flex;
  justify-content: flex-end;
  gap: 1px;
`;

const IconStrip = styled.div`
  display: flex;
  align-items: center;
  height: 26px;
  margin-left: 14px;
  padding-left: 2px;
  border: 1px solid;
  border-color: #fff #a0a0a0 #a0a0a0 transparent;
  background: linear-gradient(90deg, transparent, #efefef 60%);
`;

const PickerArea = styled.div`
  display: grid;
  grid-template-columns: 132px 112px 111px;
  grid-auto-rows: 20px;
  gap: 4px 4px;
  padding: 2px 0 0 3px;
`;

const PickerLabel = styled.span`
  line-height: 20px;
  white-space: nowrap;
`;

const WidePicker = styled.div`
  grid-column: 2 / 4;
  padding-right: 2px;
`;

const Tabs = styled.div`
  display: flex;
  align-items: flex-end;
  gap: 1px;
  height: 25px;
  padding-left: 0;
  flex: none;
`;

const Tab = styled.button<{ $w: number; $on?: boolean }>`
  ${raised}
  display: flex;
  align-items: center;
  gap: 6px;
  width: ${p => p.$w}px;
  height: ${p => (p.$on ? 21 : 18)}px;
  padding-left: ${p => (p.$on ? 6 : 25)}px;
  background: ${p => (p.$on ? '#dfdfdf' : '#efefef')};
  border-bottom: 0;
  white-space: nowrap;
`;

const TabPanel = styled.div`
  height: 71px;
  flex: none;
  padding: 7px 8px 7px 8px;
  border: 1px solid;
  border-color: #fff #606060 #606060 #fff;
`;

const OpsFrame = styled.div`
  height: 55px;
  padding: 5px 6px 4px 8px;
  background: #e0ffff;
  border: 2px ridge #d0d0d0;
`;

const OpsTable = styled.table`
  width: 906px;
  table-layout: fixed;
  border-collapse: separate;
  border-spacing: 0;
  border-top: 1px solid #a0a0a0;
`;

const SoftFooter = styled.div`
  display: flex;
  justify-content: flex-end;
  align-items: flex-start;
  height: 35px;
  flex: none;
  padding: 4px 168px 0 0;
  background: linear-gradient(90deg, #fff, #bcbcbc);
  border: 1px solid;
  border-color: #fff #a0a0a0 #a0a0a0 #fff;
`;

const CloseAction = styled(PushButton)`
  background: #cacaca;
  border-color: #e8e8e8 #a0a0a0 #a0a0a0 #e8e8e8;
`;

const SoftStatus = styled.div`
  display: grid;
  grid-template-columns: 1fr 56px 46px 69px 16px 14px;
  column-gap: 1px;
  align-items: stretch;
  flex: 1;
  padding-top: 2px;
  background: #efefef;
  line-height: 20px;
  > svg { align-self: center; }
`;

const SoftCell = styled.div`
  padding-left: 2px;
  background: #fff;
  border: 1px solid #a0a0a0;
  border-width: 1px 0 0 1px;
  white-space: nowrap;
  overflow: hidden;
`;

const OPS: [React.ReactNode, number][] = [
  ['', 12], ['№', 37], ['✓', 21], ['Дата', 76], ['Наименование операции', 262], ['Значение', 150],
  ['Счет должника', 156], ['Оператор', 85], ['Дата ввода строки', 107],
];

const STRIP: [IconName, number, string?][] = [
  ['card', 90], ['windows', 41], ['zoom', 103], ['refresh', 104], ['globe', 23],
  ['bag', 31], ['mail', 66, 'Почта'], ['notify', 94, 'Уведомление'],
];

const SeniorManager = () => (
  <SoftWindow $active>
    <Caption active icon="app" title="<АРМ старшего руководителя SOFT> Платежи обещанные Все" />
    <SoftBody>
      <SoftTop>
        <SoftTools>
          <ButtonRow>
            <PushButton $w={67}><Icon name="planDoc" />План</PushButton>
            <PushButton $w={122}><Icon name="bars" />Отчеты и графики</PushButton>
            <PushButton $w={85}><Icon name="import" />Импорт</PushButton>
          </ButtonRow>
          <IconStrip>
            {STRIP.map(([icon, w, text]) => (
              <ToolButton key={icon} $w={w} aria-label={text ?? icon}><Icon name={icon} />{text}</ToolButton>
            ))}
          </IconStrip>
        </SoftTools>
        <PickerArea>
          <PickerLabel>Руководитель/Оператор:</PickerLabel>
          <Combo label="Руководитель" value="Все" hot />
          <Combo label="Оператор" value="Все" />
          <WidePicker><Combo label="Подразделение" value="Все" /></WidePicker>
        </PickerArea>
      </SoftTop>
      <Tabs>
        <Tab $w={142} $on><Icon name="blueCheck" />Платежи обещанные</Tab>
        <Tab $w={249}>Платежи подтвержденные документально</Tab>
        <Tab $w={225}>Платежи подтвержденные клиентами</Tab>
        <Tab $w={101}>Детализация</Tab>
      </Tabs>
      <TabPanel>
        <OpsFrame>
          <OpsTable>
            <colgroup>{OPS.map(([, w], i) => <col key={i} style={{ width: w }} />)}</colgroup>
            <thead><tr>{OPS.map(([name], i) => <Head key={i}>{name}</Head>)}</tr></thead>
            <tbody><tr>{OPS.map((_, i) => <Cell key={i} />)}</tr></tbody>
          </OpsTable>
        </OpsFrame>
      </TabPanel>
      <SoftFooter><CloseAction $w={90} $h={26}>Закрыть</CloseAction></SoftFooter>
      <SoftStatus>
        <SoftCell />
        <SoftCell>Уровень 2</SoftCell>
        <SoftCell>DCOM</SoftCell>
        <SoftCell />
        <Icon name="go" />
        <Grip />
      </SoftStatus>
    </SoftBody>
  </SoftWindow>
);

/* ---------- status dialog ---------- */

const Dialog = styled.section`
  position: absolute;
  left: 695px;
  top: 762px;
  width: 571px;
  height: 240px;
  padding: 0 7px;
  background: #ebebeb;
  border: 1px solid #d0d0d0;
`;

const DialogTitle = styled.header`
  display: grid;
  grid-template-columns: 1fr auto 1fr;
  height: 30px;
`;

const SmallClose = styled.button`
  justify-self: end;
  width: 19px;
  height: 19px;
  margin: 5px 0 0;
  display: flex;
  align-items: center;
  justify-content: center;
  background: #b0b0b0;
  svg { width: 6px; height: 6px; }
`;

const DialogBody = styled.div`
  padding: 5px;
  border: 1px solid #fff;
  background: #efefef;
`;

const DialogTop = styled.div`
  height: 36px;
  padding: 4px 6px;
  background: #e1ffe1;
  border: 1px solid #a0a0a0;
`;

const StatusList = styled.fieldset`
  display: flex;
  flex-direction: column;
  height: 180px;
  margin: 5px 0 0;
  padding: 13px 8px;
  background: #dfdfdf;
  border: 1px solid #a0a0a0;
`;

const Choice = styled.label`
  display: flex;
  align-items: center;
  gap: 4px;
  height: 12px;
  line-height: 12px;
`;

const Radio = styled.input`
  appearance: none;
  flex: none;
  width: 11px;
  height: 11px;
  border: 1px solid;
  border-color: #606060 #e8e8e8 #e8e8e8 #606060;
  border-radius: 50%;
  background: #fff;
  &:checked { background: radial-gradient(circle, #000 0 2px, #fff 3px); }
`;

const StatusDialog = () => (
  <Dialog>
    <DialogTitle>
      <span />
      <Title>Изменить статус</Title>
      <SmallClose aria-label="Закрыть"><Cross /></SmallClose>
    </DialogTitle>
    <DialogBody>
      <DialogTop><PushButton $w={122}><Icon name="door" />Изменить статус</PushButton></DialogTop>
      <StatusList>
        {['В работе', 'Ожидание подтверждения оплаты документальное', 'Ожидание подтверждения оплаты клиентом', 'Отказ оператора от работы с должником'].map((t, i) => (
          <Choice key={t}><Radio type="radio" name="status" defaultChecked={i === 0} />{t}</Choice>
        ))}
      </StatusList>
    </DialogBody>
  </Dialog>
);

/* ---------- annotations ---------- */

const Redaction = styled.div<{ $x: number; $y: number; $w: number; $h: number }>`
  position: absolute;
  left: ${p => p.$x}px;
  top: ${p => p.$y}px;
  width: ${p => p.$w}px;
  height: ${p => p.$h}px;
  background: #ffaec9;
`;

const Callout = styled.div`
  position: absolute;
  left: 270px;
  top: 161px;
  width: 178px;
  height: 60px;
  display: flex;
  align-items: center;
  justify-content: center;
  padding: 0 8px 8px 0;
  background: #ffc90e;
  border: 5px solid ${MAROON};
  border-radius: 18px / 12px;
  color: ${MAROON};
  font: bold 16px/20px "Liberation Serif", "Times New Roman", serif;
  white-space: nowrap;
`;

const Pointers = styled.svg`
  position: absolute;
  left: 0;
  top: 0;
  width: 100%;
  height: 100%;
  pointer-events: none;
`;

export default function App() {
  return (
    <Desktop>
      <GlobalStyle />
      <Reports />
      <Server />
      <DebtorWindow><DebtorContent rows={DEBTORS} current={20} /></DebtorWindow>
      <Redaction $x={368} $y={318} $w={27} $h={502} />
      <SeniorManager />
      <SecondClip>
        <SecondWindow><DebtorContent rows={BANK} current={32532} picked /></SecondWindow>
      </SecondClip>
      <Redaction $x={543} $y={716} $w={19} $h={181} />
      <StatusDialog />
      <Callout>АРМ Руководителя</Callout>
      <Pointers fill="none" stroke={MAROON} strokeWidth="3">
        <path d="M890 14L349 161" />
        <path d="M360 163L440 170L500 176L1000 227L1192 247" />
        <path d="M447 170L710 496" />
        <path d="M429 167L446 212L625 652" />
      </Pointers>
    </Desktop>
  );
}
